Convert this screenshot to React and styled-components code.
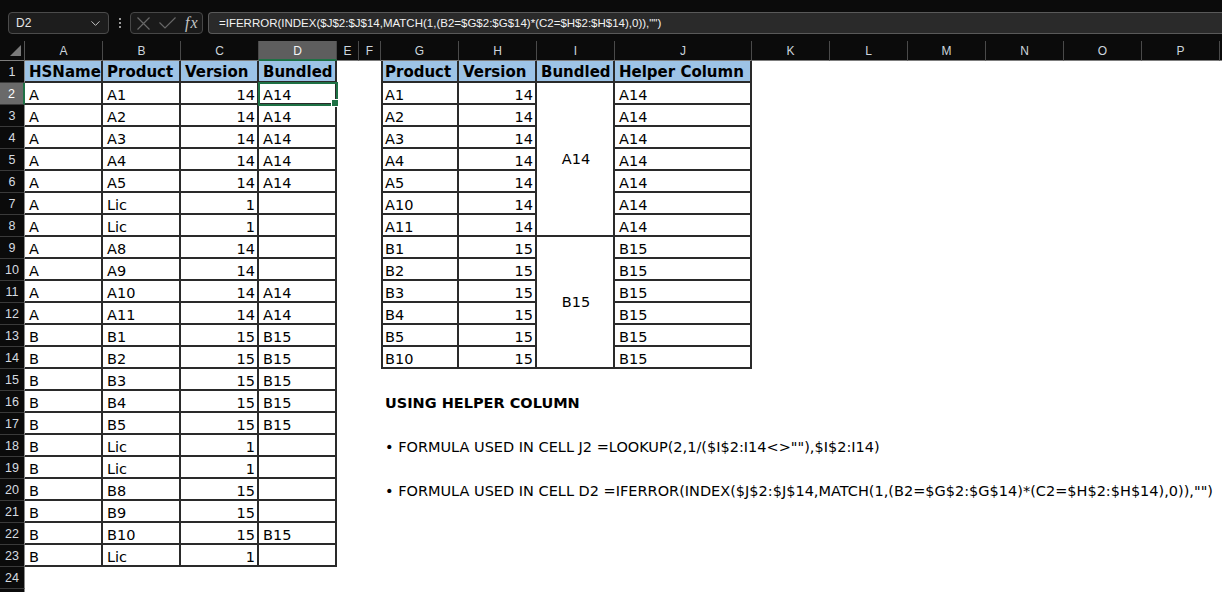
import React from 'react';
import styled, { createGlobalStyle, css } from 'styled-components';
import { ChevronDown } from 'lucide-react';

const LINE = '#2a2a2a';
const GREEN = '#1e7145';
const DARK = '#0b0b0b';

const GlobalStyle = createGlobalStyle`
  html, body {
    margin: 0;
    padding: 0;
    background: ${DARK};
  }
  * { box-sizing: border-box; }
`;

const Window = styled.div`
  width: 1222px;
  height: 592px;
  overflow: hidden;
  background: ${DARK};
  font-family: "Liberation Sans", Arial, sans-serif;
`;

const Toolbar = styled.div`
  display: flex;
  align-items: stretch;
  height: 41px;
  padding: 12px 0 7px 8px;
`;

const NameBox = styled.div`
  width: 101px;
  display: flex;
  align-items: center;
  justify-content: space-between;
  padding: 0 5px 0 7px;
  background: #1d1d1d;
  border: 1px solid #4b4b4b;
  border-radius: 4px;
  color: #e6e6e6;
  font-size: 12px;
`;

const Dots = styled.div`
  width: 21px;
  display: flex;
  flex-direction: column;
  align-items: center;
  justify-content: center;
  gap: 2px;

  span {
    width: 2px;
    height: 2px;
    background: #9a9a9a;
  }
`;

const EditBox = styled.div`
  width: 73px;
  display: flex;
  align-items: center;
  gap: 9px;
  padding: 0 3px 0 6px;
  background: #1a1a1a;
  border: 1px solid #474747;
  border-radius: 4px;
  color: #686868;
`;

const Fx = styled.span`
  margin-left: 0;
  font: italic 16px "Liberation Serif", serif;
  color: #c4c4c4;
  letter-spacing: 1px;
`;

const FormulaInput = styled.div`
  flex: 1;
  margin-left: 5px;
  display: flex;
  align-items: center;
  padding-left: 10px;
  background: #2a2a2a;
  border: 1px solid #595959;
  border-right: none;
  border-radius: 4px 0 0 4px;
  color: #f2f2f2;
  font-size: 11.5px;
  white-space: nowrap;
`;

const Sheet = styled.div`
  display: grid;
  grid-template-columns: ${p => p.$cols};
  grid-template-rows: 20px;
  grid-auto-rows: 22px;
  background: #fff;
`;

const Corner = styled.div`
  display: flex;
  align-items: flex-end;
  justify-content: flex-end;
  padding: 0 3px 4px 0;
  background: ${DARK};
  border-bottom: 1px solid #7d7d7d;
  border-right: 1px solid #555;
`;

const ColHeader = styled.div`
  display: flex;
  align-items: center;
  justify-content: center;
  padding-top: 1px;
  background: ${p => (p.$active ? '#5e5e5e' : DARK)};
  border-right: 1px solid #4a4a4a;
  border-bottom: ${p => (p.$active ? `2px solid ${GREEN}` : '1px solid #7d7d7d')};
  color: ${p => (p.$active ? '#f4f4f4' : '#cdd5dd')};
  font-size: 12px;
  overflow: hidden;
`;

const RowHeader = styled.div`
  display: flex;
  align-items: center;
  justify-content: center;
  background: ${p => (p.$active ? '#6a6a6a' : DARK)};
  border-bottom: 1px solid #3a3a3a;
  border-right: ${p => (p.$active ? `2px solid ${GREEN}` : '1px solid #8a8a8a')};
  color: ${p => (p.$active ? '#fff' : '#d6dbe0')};
  font-size: 12.5px;
`;

const Cell = styled.div`
  display: flex;
  align-items: ${p => (p.$middle ? 'center' : 'flex-end')};
  justify-content: ${p =>
    p.$align === 'right' ? 'flex-end' : p.$align === 'center' ? 'center' : 'flex-start'};
  min-width: 0;
  padding: 0 2px 0 ${p => (p.$left ? 2 : 4)}px;
  background: ${p => p.$fill || '#fff'};
  border-bottom: 2px solid ${p => (p.$bordered ? LINE : 'transparent')};
  border-right: ${p => (p.$bordered ? `2px solid ${LINE}` : 'none')};
  border-left: ${p => (p.$left ? `2px solid ${LINE}` : 'none')};
  grid-row: ${p => (p.$rowSpan ? `span ${p.$rowSpan}` : 'auto')};
  grid-column: ${p => (p.$colSpan ? `span ${p.$colSpan}` : 'auto')};
  color: #000;
  font-family: "DejaVu Sans", sans-serif;
  font-size: ${p => (p.$bold ? p.$boldSize || '15px' : '14.5px')};
  font-weight: ${p => (p.$bold ? 700 : 400)};
  white-space: nowrap;

  ${p =>
    p.$selected &&
    css`
      position: relative;
      z-index: 1;
      outline: 2px solid ${GREEN};
      outline-offset: -1px;

      &::after {
        content: '';
        position: absolute;
        right: -4px;
        bottom: -4px;
        width: 6px;
        height: 6px;
        background: ${GREEN};
        border: 1px solid #fff;
      }
    `}
`;

const COLS = [
  ['A', 78], ['B', 78], ['C', 78], ['D', 78], ['E', 22], ['F', 22], ['G', 78], ['H', 78],
  ['I', 78], ['J', 137], ['K', 78], ['L', 78], ['M', 78], ['N', 78], ['O', 78], ['P', 78],
];
const TEMPLATE = `25px ${COLS.map(c => `${c[1]}px`).join(' ')} 1fr`;

const leftTable = [
  ['HSName', 'Product', 'Version', 'Bundled'],
  ['A', 'A1', 14, 'A14'],
  ['A', 'A2', 14, 'A14'],
  ['A', 'A3', 14, 'A14'],
  ['A', 'A4', 14, 'A14'],
  ['A', 'A5', 14, 'A14'],
  ['A', 'Lic', 1, ''],
  ['A', 'Lic', 1, ''],
  ['A', 'A8', 14, ''],
  ['A', 'A9', 14, ''],
  ['A', 'A10', 14, 'A14'],
  ['A', 'A11', 14, 'A14'],
  ['B', 'B1', 15, 'B15'],
  ['B', 'B2', 15, 'B15'],
  ['B', 'B3', 15, 'B15'],
  ['B', 'B4', 15, 'B15'],
  ['B', 'B5', 15, 'B15'],
  ['B', 'Lic', 1, ''],
  ['B', 'Lic', 1, ''],
  ['B', 'B8', 15, ''],
  ['B', 'B9', 15, ''],
  ['B', 'B10', 15, 'B15'],
  ['B', 'Lic', 1, ''],
];

const rightTable = [
  ['Product', 'Version', 'Bundled', 'Helper Column'],
  ['A1', 14, 'A14', 'A14'],
  ['A2', 14, null, 'A14'],
  ['A3', 14, null, 'A14'],
  ['A4', 14, null, 'A14'],
  ['A5', 14, null, 'A14'],
  ['A10', 14, null, 'A14'],
  ['A11', 14, null, 'A14'],
  ['B1', 15, 'B15', 'B15'],
  ['B2', 15, null, 'B15'],
  ['B3', 15, null, 'B15'],
  ['B4', 15, null, 'B15'],
  ['B5', 15, null, 'B15'],
  ['B10', 15, null, 'B15'],
];

const notes = {
  16: { text: 'USING HELPER COLUMN', bold: true },
  18: { text: '• FORMULA USED IN CELL J2 =LOOKUP(2,1/($I$2:I14<>""),$I$2:I14)' },
  20: { text: '• FORMULA USED IN CELL D2 =IFERROR(INDEX($J$2:$J$14,MATCH(1,(B2=$G$2:$G$14)*(C2=$H$2:$H$14),0)),"")' },
};

const FORMULA = '=IFERROR(INDEX($J$2:$J$14,MATCH(1,(B2=$G$2:$G$14)*(C2=$H$2:$H$14),0)),"")';
const HEAD_FILL = '#9dc3e6';
const ROW_COUNT = 24;

const empty = (key, n) => Array.from({ length: n }, (_, i) => <Cell key={`${key}-${i}`} />);

const CancelIcon = () => (
  <svg width="13" height="13" viewBox="0 0 13 13" fill="none" stroke="currentColor" strokeWidth="1.2">
    <path d="M0.5 0.5 L12.5 12.5 M12.5 0.5 L0.5 12.5" />
  </svg>
);

const EnterIcon = () => (
  <svg width="17" height="12" viewBox="0 0 17 12" fill="none" stroke="currentColor" strokeWidth="1.2">
    <path d="M0.5 5.5 L6 11 L16.5 0.5" />
  </svg>
);

function renderRow(r) {
  const cells = [
    <RowHeader key="h" $active={r === 2}>{r <= ROW_COUNT ? r : ''}</RowHeader>,
  ];

  // A:D
  const left = leftTable[r - 1];
  if (left) {
    const head = r === 1;
    left.forEach((v, i) => (
      cells.push(
        <Cell
          key={`l${i}`}
          $bordered
          $bold={head}
          $fill={head ? HEAD_FILL : undefined}
          $align={!head && i === 2 ? 'right' : 'left'}
          $selected={r === 2 && i === 3}
        >
          {v}
        </Cell>
      )
    ));
  } else {
    cells.push(...empty('l', 4));
  }

  cells.push(...empty('ef', 2));

  // G:J
  const right = rightTable[r - 1];
  if (right) {
    const head = r === 1;
    cells.push(
      <Cell key="g" $bordered $left $bold={head} $fill={head ? HEAD_FILL : undefined}>{right[0]}</Cell>,
      <Cell key="hh" $bordered $bold={head} $fill={head ? HEAD_FILL : undefined} $align={head ? 'left' : 'right'}>
        {right[1]}
      </Cell>
    );
    if (head) {
      cells.push(<Cell key="i" $bordered $bold $fill={HEAD_FILL}>{right[2]}</Cell>);
    } else if (right[2]) {
      cells.push(
        <Cell key="i" $bordered $middle $align="center" $rowSpan={r === 2 ? 7 : 6}>
          {right[2]}
        </Cell>
      );
    }
    cells.push(<Cell key="j" $bordered $bold={head} $fill={head ? HEAD_FILL : undefined}>{right[3]}</Cell>);
    cells.push(...empty('k', 7));
  } else if (notes[r]) {
    cells.push(
      <Cell key="note" $colSpan={11} $bold={notes[r].bold} $boldSize="14.5px">
        {notes[r].text}
      </Cell>
    );
  } else {
    cells.push(...empty('g', 11));
  }

  return cells;
}

export default function App() {
  // one extra, unlabelled row fills the sliver under row 24
  const rows = Array.from({ length: ROW_COUNT + 1 }, (_, i) => i + 1);
  return (
    <>
      <GlobalStyle />
      <Window>
        <Toolbar>
          <NameBox>
            D2
            <ChevronDown size={15} strokeWidth={1.5} color="#cfcfcf" />
          </NameBox>
          <Dots><span /><span /><span /></Dots>
          <EditBox>
            <CancelIcon />
            <EnterIcon />
            <Fx>fx</Fx>
          </EditBox>
          <FormulaInput>{FORMULA}</FormulaInput>
        </Toolbar>
        <Sheet $cols={TEMPLATE}>
          <Corner>
            <svg width="11" height="11" viewBox="0 0 11 11">
              <polygon points="11,0 11,11 0,11" fill="#7a7a7a" />
            </svg>
          </Corner>
          {COLS.map(([k]) => (
            <ColHeader key={k} $active={k === 'D'}>{k}</ColHeader>
          ))}
          <ColHeader />
          {rows.map(r => (
            <React.Fragment key={r}>{renderRow(r)}</React.Fragment>
          ))}
        </Sheet>
      </Window>
    </>
  );
}
